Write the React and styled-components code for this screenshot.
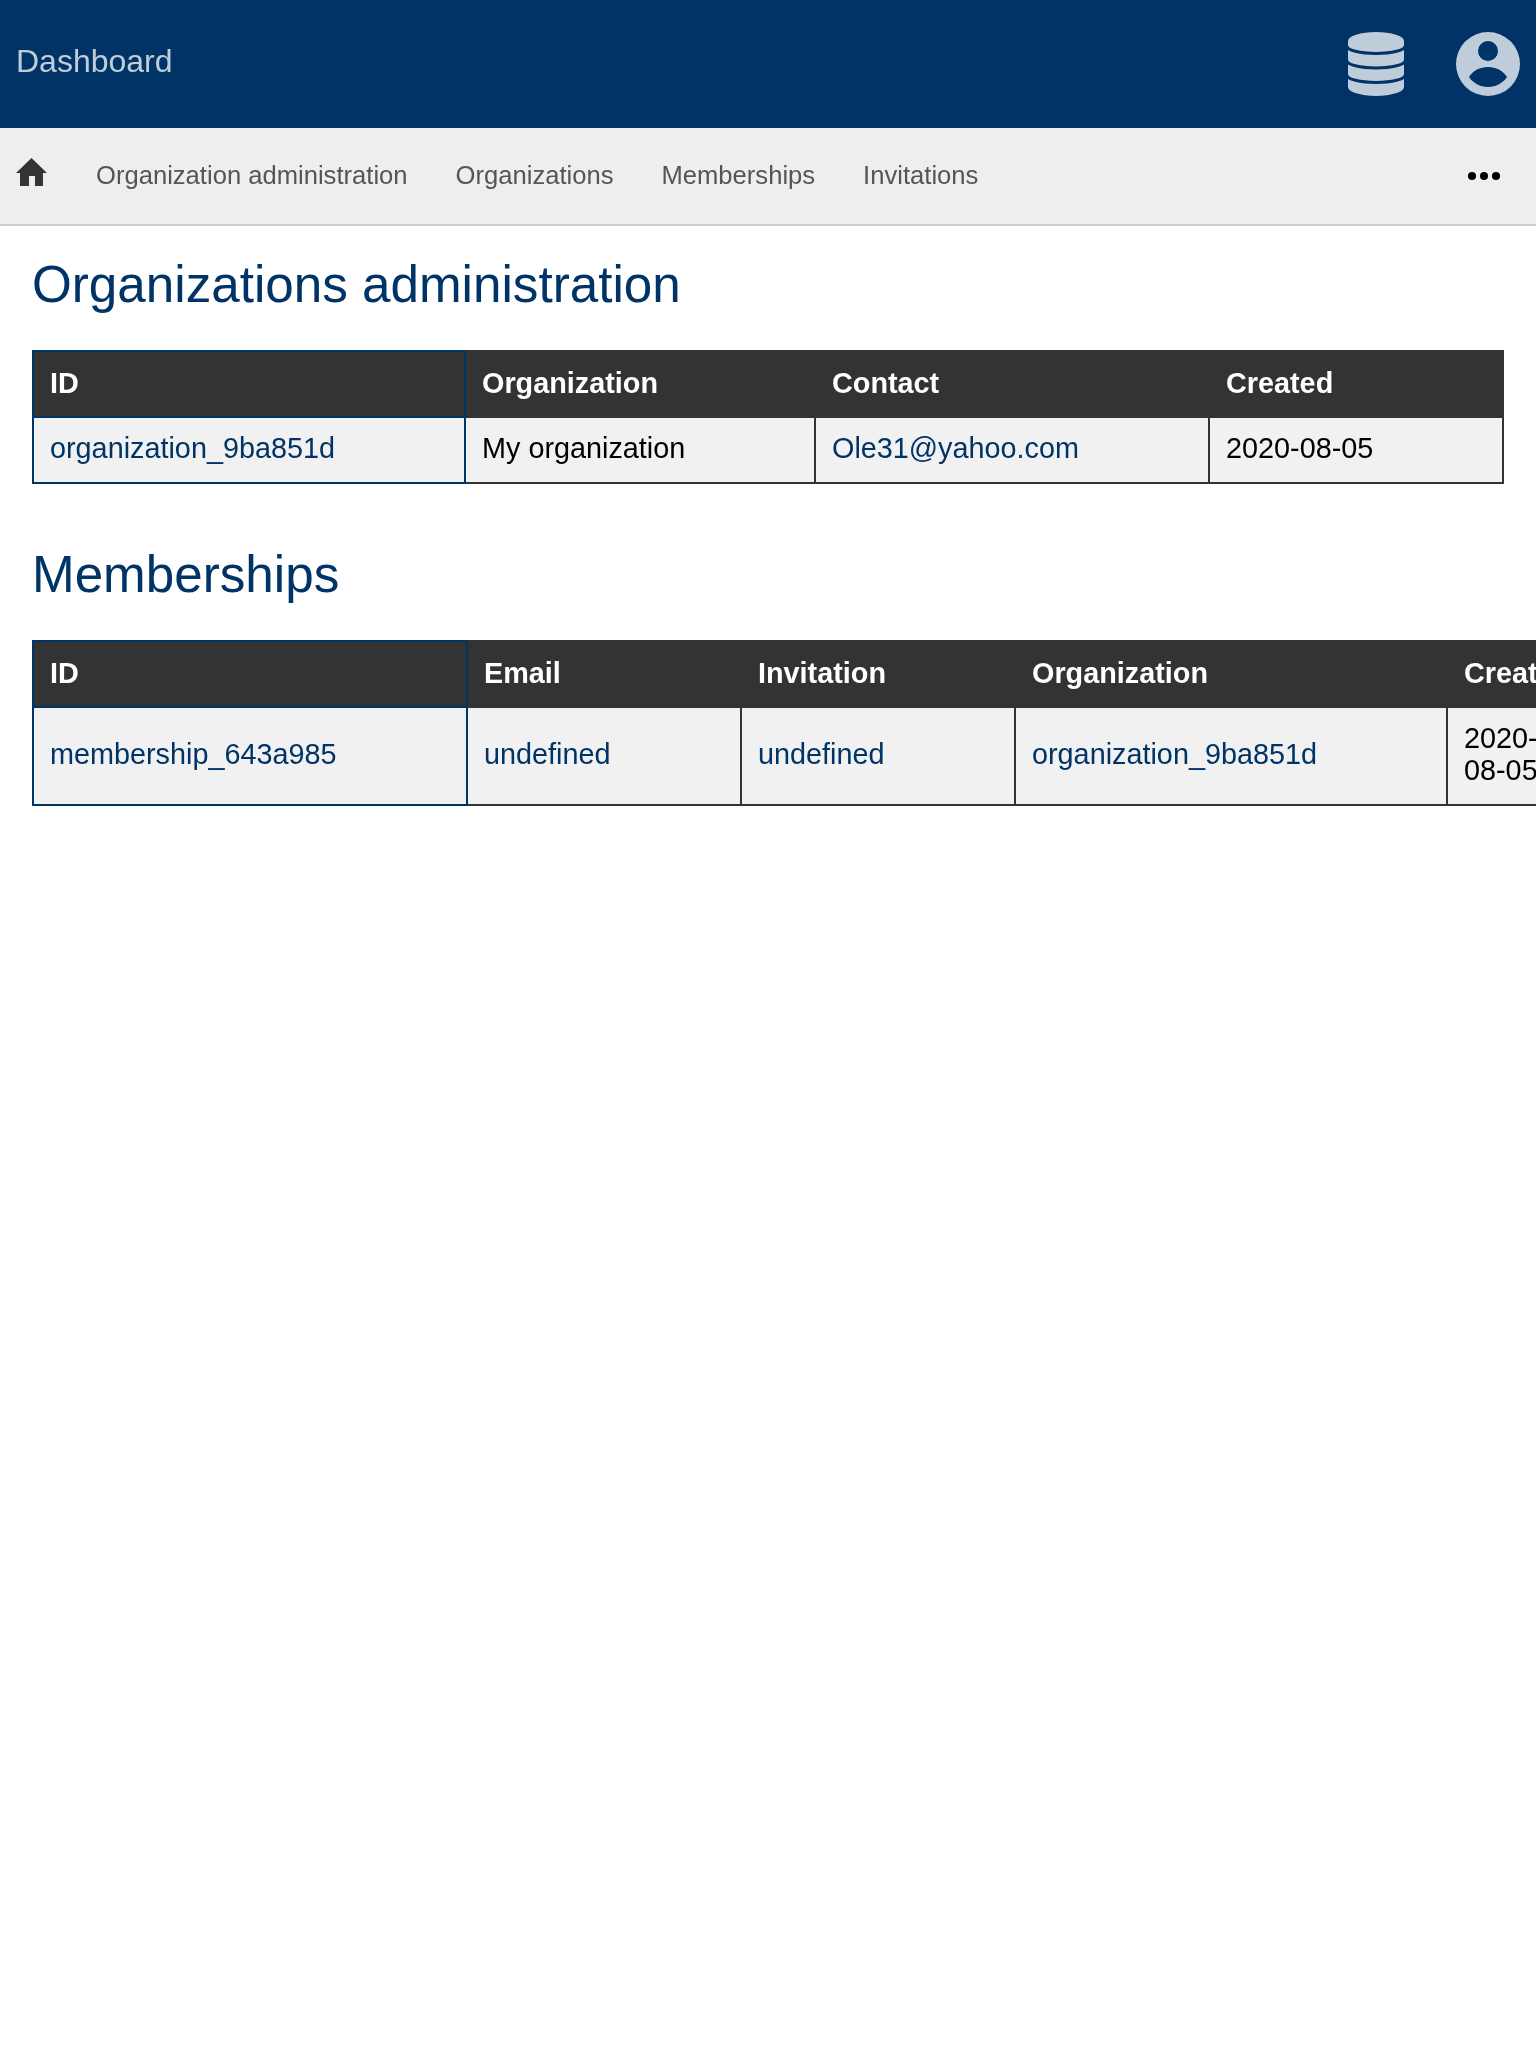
import React from 'react';
import styled, { createGlobalStyle } from 'styled-components';

const GlobalStyle = createGlobalStyle`
  html, body {
    margin: 0;
    padding: 0;
    background: #fff;
    overflow-x: hidden;
    font-family: "Liberation Sans", Arial, sans-serif;
  }

  #root {
    will-change: transform;
  }
`;

const navy = '#003366';

const Header = styled.header`
  display: flex;
  align-items: center;
  justify-content: space-between;
  height: 128px;
  padding: 0 16px;
  box-sizing: border-box;
  background: ${navy};
`;

const Title = styled.a`
  font-size: 32px;
  padding-bottom: 6px;
  color: #bfccd9;
`;

const HeaderIcons = styled.div`
  display: flex;
  align-items: center;
  gap: 52px;
  color: #bfccd9;
`;

const Nav = styled.nav`
  display: flex;
  align-items: center;
  height: 98px;
  padding: 0 36px 0 16px;
  box-sizing: border-box;
  background: #eee;
  border-bottom: 2px solid #ccc;
`;

const HomeLink = styled.a`
  display: flex;
  color: #333;
  margin: -8px 48px 0 0;
`;

const NavLinks = styled.div`
  display: flex;
  flex: 1;
  gap: 48px;
`;

const NavLink = styled.a`
  font-size: 25.6px;
  padding-bottom: 2px;
  color: #555;
`;

const More = styled.a`
  display: flex;
  color: #000;
`;

const Main = styled.main`
  padding: 0 32px;
`;

const Heading = styled.h1`
  margin: 0;
  padding: 29px 0 35px;
  font-size: 51.2px;
  line-height: 60px;
  font-weight: 400;
  color: ${navy};

  & + table + & {
    padding-top: 61px;
  }
`;

const Table = styled.table`
  border-collapse: collapse;
  table-layout: fixed;
  width: ${(p) => p.$width}px;
  font-size: 28.8px;
  line-height: 32px;
`;

const Th = styled.th`
  width: ${(p) => p.$width}px;
  padding: 15px 16px 17px;
  box-sizing: border-box;
  text-align: left;
  font-weight: 700;
  color: #fff;
  background: #333;
  border: 2px solid ${(p) => (p.$first ? navy : '#333')};
`;

const Td = styled.td`
  padding: 14px 16px 18px;
  box-sizing: border-box;
  color: #000;
  background: #f1f1f1;
  border: 2px solid ${(p) => (p.$first ? navy : '#333')};
`;

const CellLink = styled.a`
  color: ${navy};
`;

const HomeIcon = () => (
  <svg width="32" height="28" viewBox="0 0 32 28" fill="currentColor">
    <path d="M15.500 0L31 15H27V28H19V18H13V28H4V15H0Z" />
  </svg>
);

const DatabaseIcon = () => (
  <svg width="56" height="64" viewBox="0 0 56 64" fill="currentColor">
    <path d="M0 9A28 9 0 0 1 56 9V55A28 9 0 0 1 0 55Z" />
    <g fill="none" stroke={navy} strokeWidth="3">
      <path d="M-1 14A29 7.500 0 0 0 57 14" />
      <path d="M-1 28.500A29 7.500 0 0 0 57 28.500" />
      <path d="M-1 43A29 7.500 0 0 0 57 43" />
    </g>
  </svg>
);

const UserIcon = () => (
  <svg width="64" height="64" viewBox="0 0 64 64" fill="currentColor">
    <path
      fillRule="evenodd"
      d="M32 0a32 32 0 1 0 0 64a32 32 0 1 0 0-64zM32 9a10 10 0 1 1 0 20a10 10 0 1 1 0-20zM13 45C17 38.500 24 35 32 35S47 38.500 51 45C47 51 40 55 32 55S17 51 13 45z"
    />
  </svg>
);

const DotsIcon = () => (
  <svg width="32" height="8" viewBox="0 0 32 8" fill="currentColor">
    <circle cx="4" cy="4" r="4" />
    <circle cx="16" cy="4" r="4" />
    <circle cx="28" cy="4" r="4" />
  </svg>
);

const orgColumns = [
  { name: 'ID', width: 432 },
  { name: 'Organization', width: 350 },
  { name: 'Contact', width: 394 },
  { name: 'Created', width: 294 },
];

const memberColumns = [
  { name: 'ID', width: 434 },
  { name: 'Email', width: 274 },
  { name: 'Invitation', width: 274 },
  { name: 'Organization', width: 432 },
  { name: 'Created', width: 120 },
];

const DataTable = ({ columns, children }) => (
  <Table $width={columns.reduce((sum, c) => sum + c.width, 0)}>
    <thead>
      <tr>
        {columns.map((c, i) => (
          <Th key={c.name} $width={c.width} $first={i === 0}>
            {c.name}
          </Th>
        ))}
      </tr>
    </thead>
    <tbody>{children}</tbody>
  </Table>
);

export default function App() {
  return (
    <>
      <GlobalStyle />
      <Header>
        <Title>Dashboard</Title>
        <HeaderIcons>
          <DatabaseIcon />
          <UserIcon />
        </HeaderIcons>
      </Header>
      <Nav>
        <HomeLink>
          <HomeIcon />
        </HomeLink>
        <NavLinks>
          <NavLink>Organization administration</NavLink>
          <NavLink>Organizations</NavLink>
          <NavLink>Memberships</NavLink>
          <NavLink>Invitations</NavLink>
        </NavLinks>
        <More>
          <DotsIcon />
        </More>
      </Nav>
      <Main>
        <Heading>Organizations administration</Heading>
        <DataTable columns={orgColumns}>
          <tr>
            <Td $first>
              <CellLink>organization_9ba851d</CellLink>
            </Td>
            <Td>My organization</Td>
            <Td>
              <CellLink>Ole31@yahoo.com</CellLink>
            </Td>
            <Td>2020-08-05</Td>
          </tr>
        </DataTable>
        <Heading>Memberships</Heading>
        <DataTable columns={memberColumns}>
          <tr>
            <Td $first>
              <CellLink>membership_643a985</CellLink>
            </Td>
            <Td>
              <CellLink>undefined</CellLink>
            </Td>
            <Td>
              <CellLink>undefined</CellLink>
            </Td>
            <Td>
              <CellLink>organization_9ba851d</CellLink>
            </Td>
            <Td>2020-08-05</Td>
          </tr>
        </DataTable>
      </Main>
    </>
  );
}
